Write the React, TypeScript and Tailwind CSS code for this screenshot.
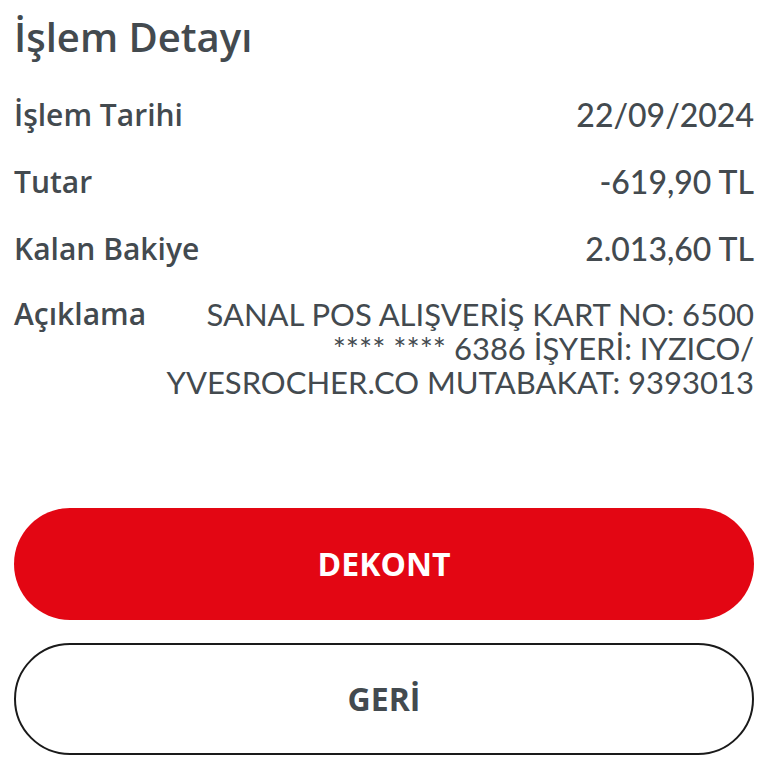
export default function App() {
  const rows = [
    { label: 'İşlem Tarihi', value: '22/09/2024' },
    { label: 'Tutar', value: '-619,90 TL' },
    { label: 'Kalan Bakiye', value: '2.013,60 TL' },
  ];

  return (
    <main className="bg-white w-[768px] h-[768px] px-[14px] text-[#434a4f] font-['Open_Sans',sans-serif]">
      {/* Header */}
      <h1 className="pt-[12px] text-[40px] leading-[50px] font-semibold">İşlem Detayı</h1>

      {/* Details */}
      <div className="mt-[19px] flex flex-col">
        {rows.map((r) => (
          <div key={r.label} className="flex justify-between items-center h-[67px]">
            <span className="text-[30px] font-semibold">{r.label}</span>
            <span className="text-[32px] font-medium font-['Lato',sans-serif]">{r.value}</span>
          </div>
        ))}
        <div className="flex justify-between items-start gap-[20px] pt-[15px]">
          <span className="text-[30px] font-semibold leading-[34px] shrink-0">Açıklama</span>
          <p className="text-[31px] leading-[34px] text-right font-['Lato',sans-serif] font-normal">
            SANAL POS ALIŞVERİŞ KART NO: 6500
            <br />
            **** **** 6386 İŞYERİ: IYZICO/
            <br />
            YVESROCHER.CO MUTABAKAT: 9393013
          </p>
        </div>
      </div>

      {/* Buttons */}
      <div className="mt-[109px] flex flex-col gap-[23px]">
        <button className="h-[112px] w-full rounded-full bg-[#e30613] text-white text-[32px] font-bold">
          DEKONT
        </button>
        <button className="h-[112px] w-full rounded-full border-2 border-[#1a1a1a] text-[#434a4f] text-[32px] font-bold">
          GERİ
        </button>
      </div>
    </main>
  );
}
